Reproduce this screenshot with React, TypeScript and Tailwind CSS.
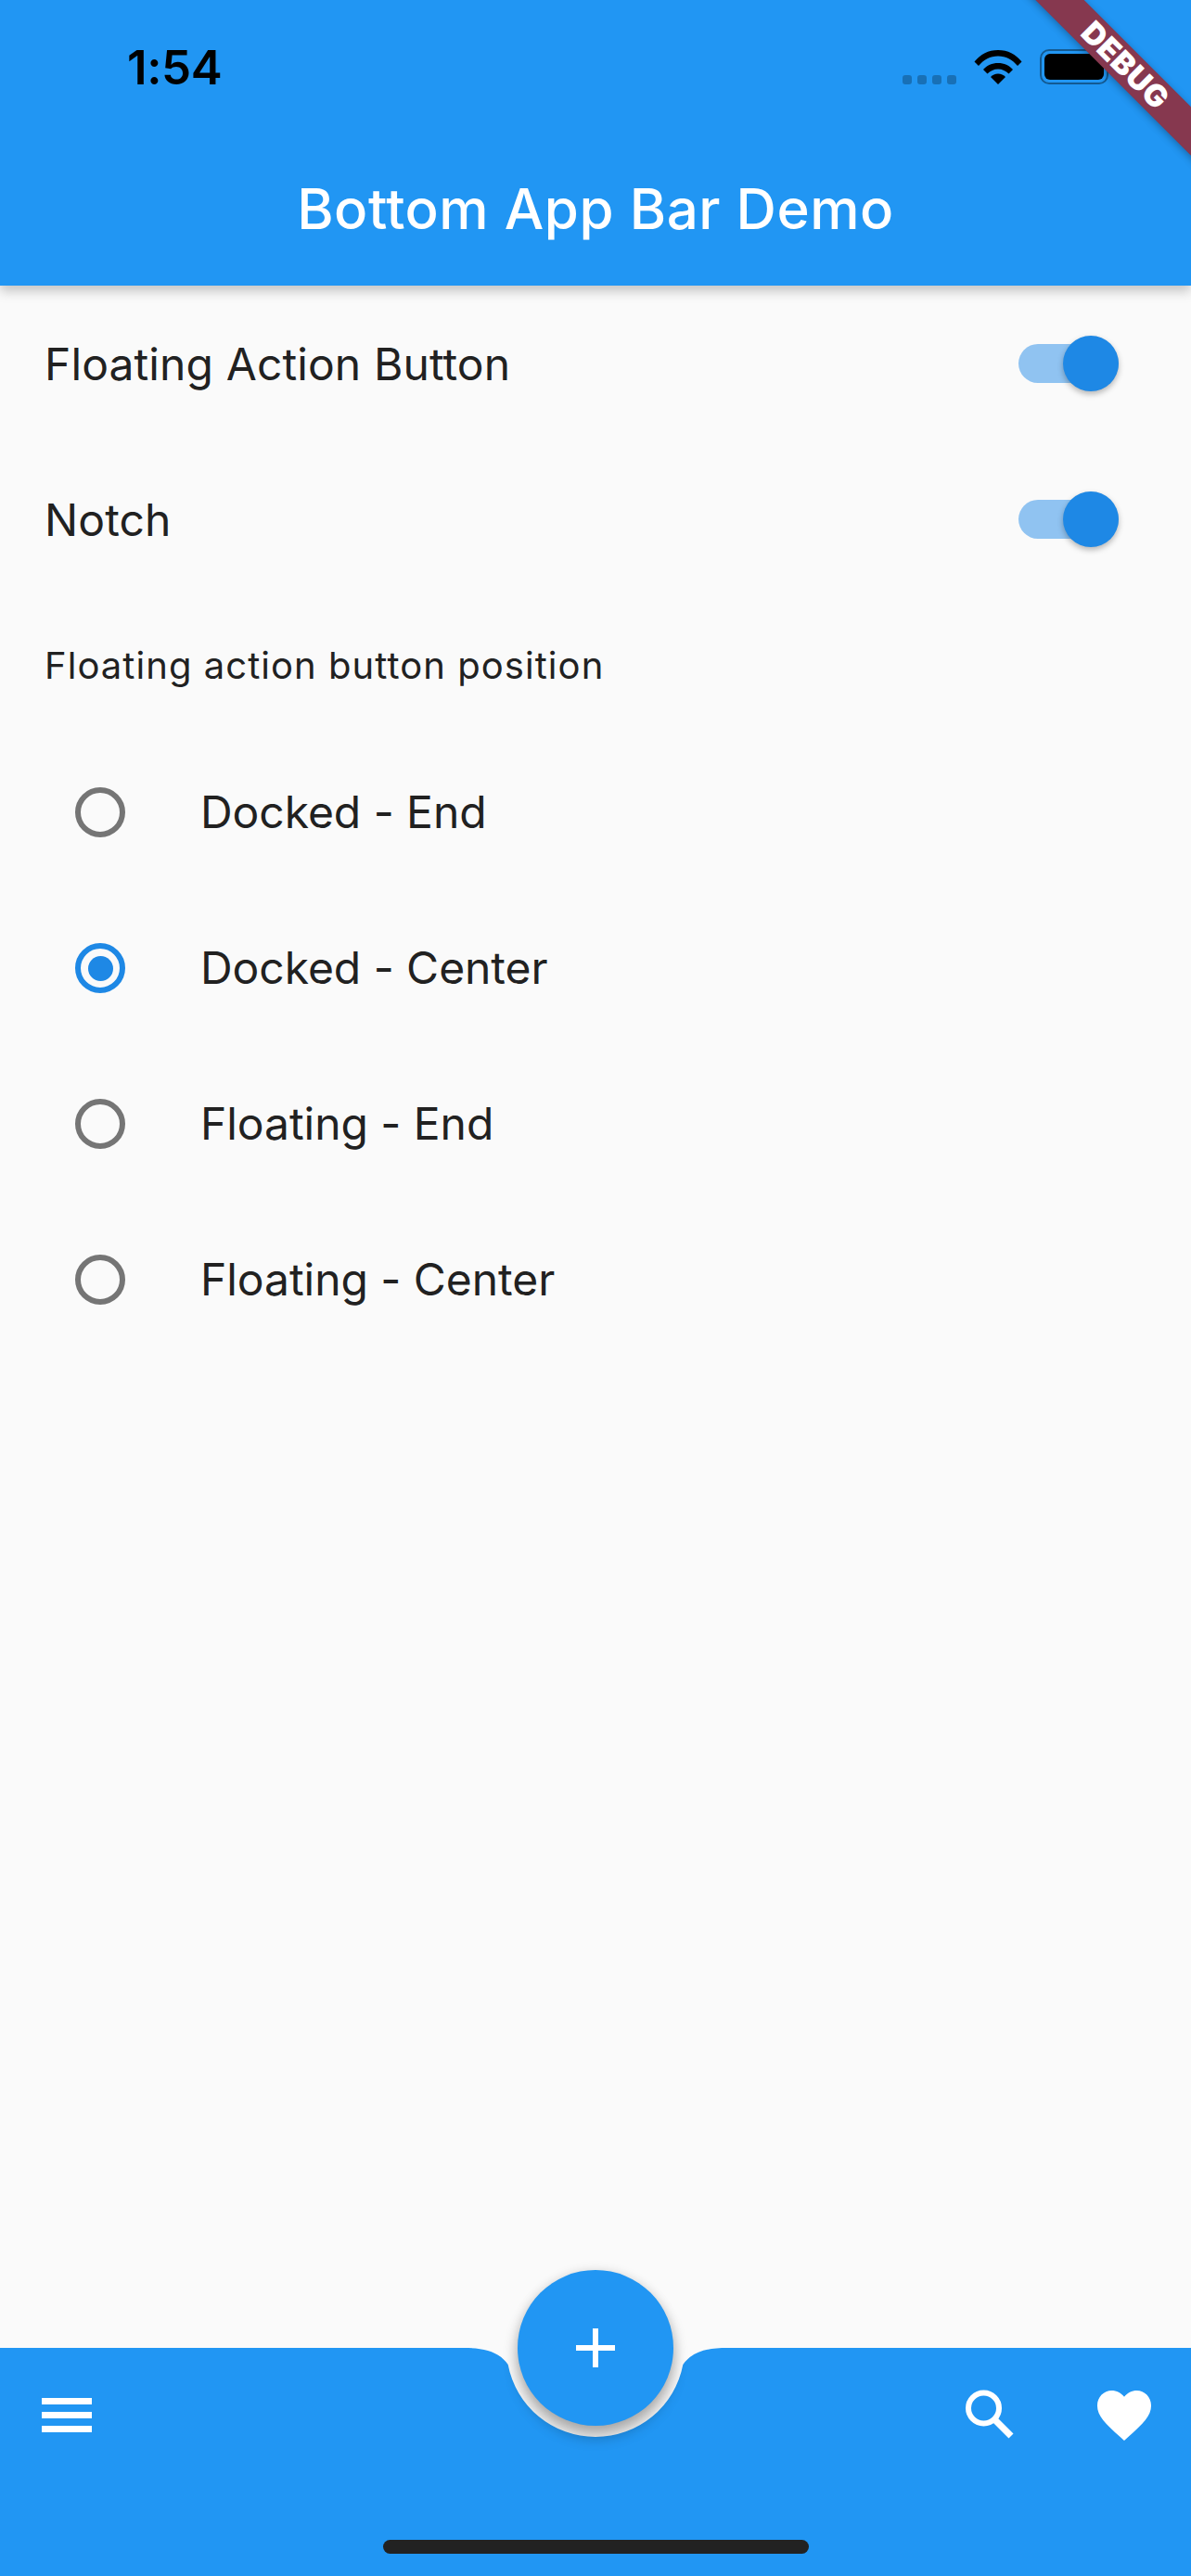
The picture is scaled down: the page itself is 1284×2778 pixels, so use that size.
const FONT = "font-['Inter','Noto_Sans',sans-serif]";

function StatusBar() {
  return (
    <div className="flex h-[132px] items-start">
      <span className="ml-[137px] mt-[50px] text-[51px] leading-[46px] font-semibold text-black font-['Inter',sans-serif] tracking-[-0.4px]">1:54</span>
      <div className="ml-auto mt-[53px] mr-[89px] flex items-start">
        <div className="mt-[28px] mr-[19px] flex gap-[6px]">
          <span className="w-[10px] h-[10px] rounded-[3px] bg-black/25" />
          <span className="w-[10px] h-[10px] rounded-[3px] bg-black/25" />
          <span className="w-[10px] h-[10px] rounded-[3px] bg-black/25" />
          <span className="w-[10px] h-[10px] rounded-[3px] bg-black/25" />
        </div>
        <svg width="52" height="38" viewBox="0 0 52 38" className="mr-[19px]">
          <path d="M0.5 13.500C7 5.500 15.500 1 26 1s19 4.500 25.500 12.500l-4.500 4.500C41.500 11.500 34.500 7.500 26 7.500S10.500 11.500 5 18z" fill="#000" />
          <path d="M10 22c4-4.500 9.500-7 16-7s12 2.500 16 7l-4.500 4.500c-3-3-7-5-11.500-5s-8.500 2-11.500 5z" fill="#000" />
          <path d="M18 30c2-2 4.800-3.500 8-3.500s6 1.500 8 3.500l-8 8z" fill="#000" />
        </svg>
        <div className="w-[74px] h-[38px] rounded-[10px] border-[2px] border-black/40 p-[3px]">
          <div className="w-full h-full rounded-[6px] bg-black" />
        </div>
      </div>
    </div>
  );
}

function AppBar() {
  return (
    <div className="relative z-10 h-[308px] bg-[#2196f3] shadow-[0_6px_12px_rgba(0,0,0,0.22)]">
      <StatusBar />
      <div className="flex h-[176px] justify-center pt-[57px]">
        <span className="text-[60px] leading-[72px] font-medium text-white tracking-[0.55px]">Bottom App Bar Demo</span>
      </div>
    </div>
  );
}

function Toggle() {
  return (
    <div className="relative w-[108px] h-[42px] rounded-full bg-[#90c3f1]">
      <span className="absolute right-0 top-[-9px] w-[60px] h-[60px] rounded-full bg-[#1e88e5] shadow-[0_3px_6px_rgba(0,0,0,0.28)]" />
    </div>
  );
}

function SwitchRow({ label }: { label: string }) {
  return (
    <div className="flex h-[168px] items-center justify-between pl-[48px] pr-[78px]">
      <span className="pt-[2px] text-[48px] text-[#212121] tracking-[0.1px]">{label}</span>
      <Toggle />
    </div>
  );
}

function RadioRow({ label, checked }: { label: string; checked?: boolean }) {
  return (
    <div className="flex h-[168px] items-center pl-[81px]">
      <span className={checked ? 'flex w-[54px] h-[54px] items-center justify-center rounded-full border-[6px] border-[#1e88e5]' : 'w-[54px] h-[54px] rounded-full border-[6px] border-[#757575]'}>
        {checked && <span className="w-[27px] h-[27px] rounded-full bg-[#1e88e5]" />}
      </span>
      <span className="ml-[81px] text-[48px] text-[#212121] tracking-[-0.05px]">{label}</span>
    </div>
  );
}

function BottomBar() {
  return (
    <div className="relative h-[246px] bg-[#2196f3]">
      <svg width="300" height="110" viewBox="0 0 300 110" className="absolute left-[492px] top-0">
        <path d="M0 0H8C30 0 46 4 55.700 18A96 96 0 0 0 244.300 18C254 4 270 0 292 0H300Z" fill="#fafafa" />
      </svg>
      <div className="flex h-[144px] items-center pl-[45px] pr-[42px]">
        <div className="flex flex-col gap-[8px]">
          <span className="block w-[54px] h-[7px] bg-white" />
          <span className="block w-[54px] h-[7px] bg-white" />
          <span className="block w-[54px] h-[7px] bg-white" />
        </div>
        <svg width="54" height="54" viewBox="0 0 54 54" className="ml-auto mr-[88px]">
          <circle cx="20.500" cy="20" r="16.500" fill="none" stroke="#fff" strokeWidth="6" />
          <path d="M32 32L50 50" stroke="#fff" strokeWidth="7" />
        </svg>
        <svg width="60" height="55" viewBox="0 0 62 56" preserveAspectRatio="none">
          <path d="M31 56L26.500 52C10 37 1 29 1 17.500 1 8 8.500 1 17 1c5.500 0 10.500 2.500 14 7 3.500-4.500 8.500-7 14-7 8.500 0 16 7 16 16.500C61 29 52 37 35.500 52z" fill="#fff" />
        </svg>
      </div>
      <div className="flex justify-center pt-[63px]">
        <span className="w-[459px] h-[15px] rounded-full bg-[#222222]" />
      </div>
    </div>
  );
}

export default function App() {
  return (
    <div className={`relative flex h-[2778px] w-[1284px] flex-col overflow-hidden bg-[#fafafa] ${FONT}`}>
      <AppBar />
      <main className="flex-1">
        <SwitchRow label="Floating Action Button" />
        <SwitchRow label="Notch" />
        <div className="flex h-[148px] items-center pl-[48px]">
          <p className="text-[40px] text-[#212121] tracking-[1.05px]">Floating action button position</p>
        </div>
        <RadioRow label="Docked - End" />
        <RadioRow label="Docked - Center" checked />
        <RadioRow label="Floating - End" />
        <RadioRow label="Floating - Center" />
      </main>
      <BottomBar />

      <button className="absolute left-[558px] top-[2448px] z-20 flex h-[168px] w-[168px] items-center justify-center rounded-full bg-[#2196f3] shadow-[0_11px_16px_rgba(0,0,0,0.3),0_0_12px_rgba(0,0,0,0.1)]">
        <svg width="42" height="42" viewBox="0 0 42 42">
          <path d="M18 0h6v18h18v6H24v18h-6V24H0v-6h18z" fill="#fff" />
        </svg>
      </button>

      <div className="absolute right-[-99px] top-[52px] z-30 flex h-[37px] w-[340px] rotate-45 items-center justify-center bg-[#86384f] shadow-[0_2px_8px_rgba(0,0,0,0.3)]">
        <span className="text-[33px] leading-[37px] font-black tracking-[0.5px] text-white font-['Inter',sans-serif]">DEBUG</span>
      </div>
    </div>
  );
}
